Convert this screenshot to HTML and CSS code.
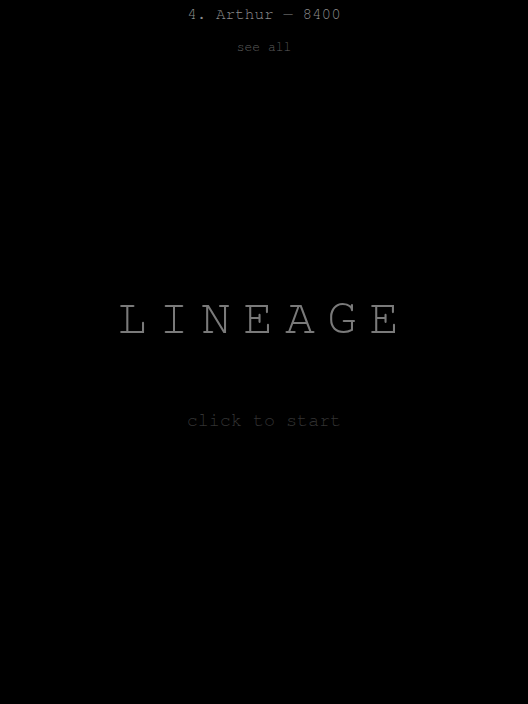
FILE: index.html
```html
<!DOCTYPE html>
<html lang="en">
<head>
    <meta charset="UTF-8">
    <meta name="viewport" content="width=device-width, initial-scale=1.0">
    <title>Lineage</title>
    <link rel="stylesheet" href="styles.css">
</head>
<body>
    <div class="scores">
        <div class="score-row">4. Arthur — 8400</div>
        <div class="see-all">see all</div>
    </div>
    <div class="title-screen">
        <h1 class="title">LINEAGE</h1>
        <div class="start">click to start</div>
    </div>
</body>
</html>
```

FILE: styles.css
```css
html, body {
    margin: 0;
    height: 100%;
}
body {
    background-color: #000;
    font-family: 'Nimbus Mono PS', 'FreeMono', 'Courier', monospace;
    display: flex;
    flex-direction: column;
    align-items: center;
}
.scores {
    text-align: center;
    padding-top: 5px;
}
.score-row {
    font-size: 16px;
    line-height: 19px;
    color: #8c8c8c;
}
.see-all {
    margin-top: 17px;
    font-size: 13px;
    color: #5e5e5e;
}
.title-screen {
    display: flex;
    flex-direction: column;
    align-items: center;
    padding-top: 239px;
}
.title {
    margin: 0;
    font-weight: normal;
    font-size: 50px;
    letter-spacing: 12px;
    color: #7a7a7a;
}
.start {
    margin-top: 68px;
    font-size: 18.4px;
    color: #333;
}
```
